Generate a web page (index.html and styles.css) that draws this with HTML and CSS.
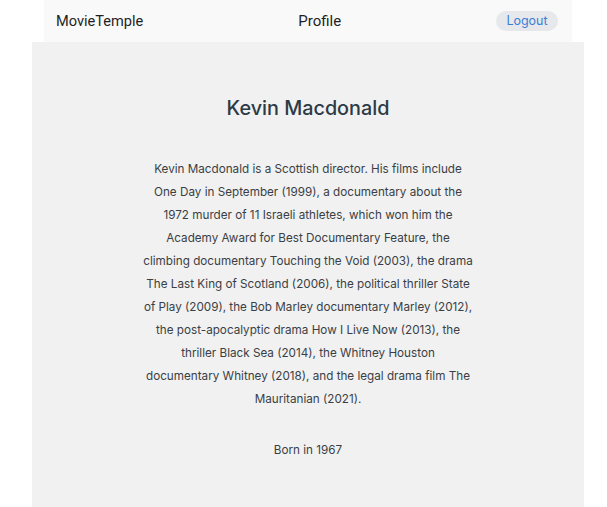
FILE: index.html
```html
<!DOCTYPE html>
<html>
<head>
<meta charset="utf-8">
<link rel="stylesheet" href="styles.css">
</head>
<body>
<div class="app">
  <header class="topbar">
    <span class="brand">MovieTemple</span>
    <span class="title">Profile</span>
    <button class="logout">Logout</button>
  </header>
  <main class="content">
    <h1 class="name">Kevin Macdonald</h1>
    <p class="bio">Kevin Macdonald is a Scottish director. His films include One Day in September (1999), a documentary about the 1972 murder of 11 Israeli athletes, which won him the Academy Award for Best Documentary Feature, the climbing documentary Touching the Void (2003), the drama The Last King of Scotland (2006), the political thriller State of Play (2009), the Bob Marley documentary Marley (2012), the post-apocalyptic drama How I Live Now (2013), the thriller Black Sea (2014), the Whitney Houston documentary Whitney (2018), and the legal drama film The Mauritanian (2021).</p>
    <p class="born">Born in 1967</p>
  </main>
</div>
</body>
</html>
```
FILE: styles.css
```css
html, body {
  margin: 0;
  background: #ffffff;
}
body {
  padding-left: 9px;
  font-family: Roboto, "Noto Sans", sans-serif;
}
.app {
  width: 552px;
  margin: 0 auto;
}
.topbar {
  width: 528px;
  height: 42px;
  margin: 0 auto;
  box-sizing: border-box;
  padding: 0 14px 0 12px;
  background: #f9f9f9;
  display: flex;
  justify-content: space-between;
  align-items: center;
}
.brand {
  font-size: 14.6px;
  color: #1f1f1f;
}
.title {
  font-size: 15px;
  color: #1f1f1f;
}
.logout {
  font-family: Inter, Roboto, sans-serif;
  font-size: 12.5px;
  color: #3b7fd6;
  background: #e7e8eb;
  border: none;
  border-radius: 10px;
  height: 20px;
  width: 62px;
  padding: 0;
  margin-top: -1px;
}
.content {
  background: #f1f1f1;
  min-height: 465px;
  box-sizing: border-box;
  padding-top: 54px;
  text-align: center;
  font-family: Inter, Roboto, sans-serif;
}
.name {
  margin: 0;
  font-size: 19.8px;
  line-height: 24px;
  font-weight: 500;
  color: #2c3a46;
}
.bio {
  width: 330px;
  margin: 38px auto 0;
  font-size: 11.7px;
  line-height: 23px;
  color: #3a3f45;
}
.born {
  margin: 28px 0 0;
  font-size: 11.7px;
  line-height: 23px;
  color: #3a3f45;
}
```
